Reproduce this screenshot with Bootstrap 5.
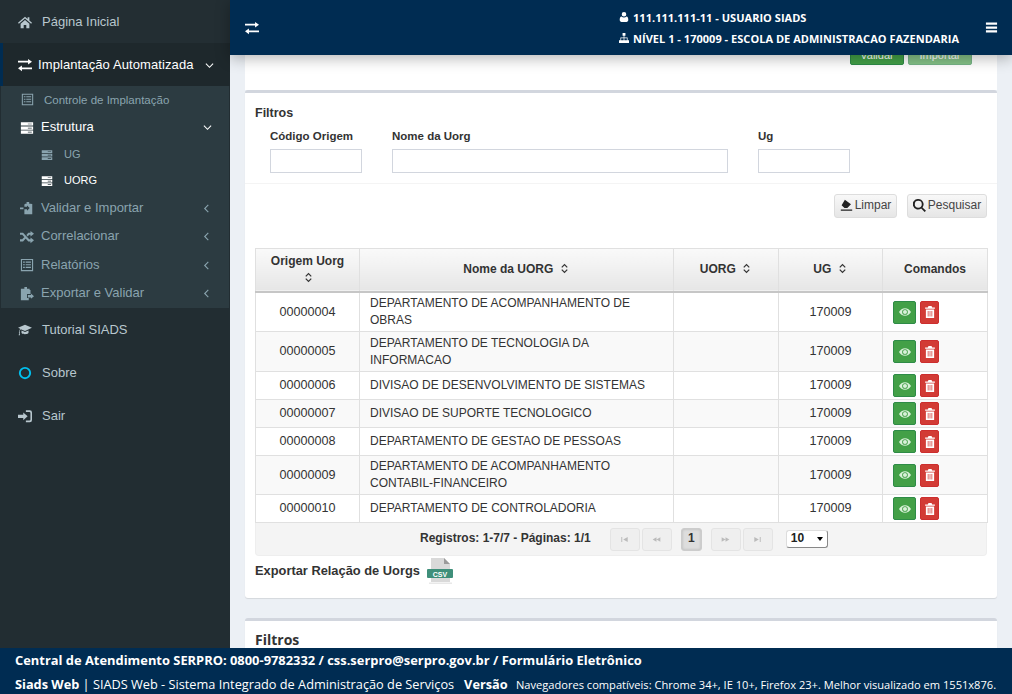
<!DOCTYPE html>
<html lang="pt-BR">
<head>
    <meta charset="UTF-8">
    <title>SIADS Web</title>
    <link href="https://cdn.jsdelivr.net/npm/bootstrap@5.3.0/dist/css/bootstrap.min.css" rel="stylesheet">
    <style>
        html, body { height: 100%; overflow: hidden; }
        body { background: #ecf0f5; color: #333; font: 13px/1.42 "Liberation Sans", Arial, sans-serif; }
        .app { height: 694px; }
        .ico { width: 1em; height: 1em; fill: currentColor; flex: none; }

        /* menu lateral */
        .sidebar { width: 230px; background: #222d32; color: #b8c7ce; font-size: 13px; }
        .sidebar a { color: inherit; text-decoration: none; display: flex; align-items: center; }
        .top-item { height: 43px; padding: 1px 0 0 18px; }
        .top-item .ico { font-size: 14px; margin-right: 10px; }
        .top-item.first { background: #232e33; }
        .top-item.open { height: 43px; background: #1e282c; color: #fff; border-left: 3px solid #002c52; padding-left: 15px; letter-spacing: .1px; }
        .top-item.open .ico:first-child { margin-right: 6px; }
        .top-item.open .chev { margin-right: 16px; margin-left: auto; font-size: 9px; }
        .submenu { background: #2c3b41; margin: 0 1px; color: #8aa4af; height: 222px; }
        .submenu a { height: 28.5px; padding: .5px 0 0 19px; }
        .submenu a .ico:first-child { font-size: 14px; margin-right: 7px; }
        .submenu a.ctrl { height: 27px; font-size: 11.5px; padding-left: 20px; }
        .submenu a.ctrl .ico:first-child { font-size: 13px; margin-right: 10px; }
        .submenu a.sel { color: #fff; }
        .submenu a.leaf { height: 26px; padding-left: 40px; font-size: 11px; }
        .submenu a.leaf .ico:first-child { font-size: 12px; margin-right: 11px; }
        .submenu .chev { margin-left: auto; margin-right: 17px; font-size: 9px; }
        .submenu .chev.esq { margin-right: 18px; }
        .after-sub .ico.cyan { color: #00c0ef; }

        /* topo */
        .topbar { height: 55px; flex: none; background: #002c52; color: #fff; font: 700 11px/1 "Open Sans", sans-serif; letter-spacing: .03px; box-shadow: 0 3px 14px rgba(0,0,0,.3); z-index: 2; padding: 0 14px 0 15px; }
        .topbar > .ico { font-size: 14px; }
        .topbar > .ico.ms-auto { font-size: 13px; }
        .topbar .user { margin-left: 360px; gap: 10px; }
        .topbar .user .ico { margin-right: 4px; font-size: 10px; }

        /* conteudo */
        .content { overflow: hidden; padding: 0 15px; min-height: 0; }
        .box-top { height: 35px; background: #fff; padding: 0 25px 0 0; border-radius: 0; }
        .btn-cut { margin-top: -10px; height: 20px; width: 54px; background: #43a047; border: 1px solid #2e8b47; color: #fff; font-size: 11px; line-height: 14px; padding: 0; border-radius: 2px; }
        .btn-cut + .btn-cut { opacity: .65; width: 64px; }
        .box { background: #fff; border: 0; border-top: 3px solid #d2d6de; border-radius: 3px; box-shadow: 0 1px 1px rgba(0,0,0,.1); }
        .box h6 { font: 700 12.5px/1 "Liberation Sans", sans-serif; color: #333; margin: 0; }
        .filter-title { padding: 14px 10px 0; }
        .filters { padding: 10px 25px 10px; gap: 30px; }
        .filters label { display: block; font-weight: 700; font-size: 11.5px; line-height: 13px; margin-bottom: 6px; }
        .filters .form-control { height: 24px; border: 1px solid #d2d6de; border-radius: 0; padding: 2px 6px; font-size: 12px; }
        .w-cod { width: 92px; }
        .w-nome { width: 336px; }
        .actions { border-top: 1px solid #f4f4f4; padding: 10px 10px 0; gap: 10px; height: 65px; }
        .btn-gray { height: 24px; background: linear-gradient(#f8f8f8, #e6e6e6); border: 1px solid #ddd; border-radius: 3px; color: #444; font-size: 12px; padding: 0; display: flex; align-items: center; justify-content: center; gap: 2px; }
        .btn-gray .ico { font-size: 13px; color: #222; }
        .btn-lim { width: 63px; }
        .btn-pes { width: 80px; }

        /* tabela */
        .tbl-wrap { padding: 0 10px; }
        .uorg { table-layout: fixed; margin: 0; font-size: 12px; color: #333; --bs-border-color: #e0e0e0; }
        .uorg th { background: linear-gradient(#fafafa, #e6e6e6); font-size: 12px; line-height: 17px; text-align: center; vertical-align: middle; padding: 3px 8px; height: 44px; border-bottom: 2px solid #c6c6c6; }
        .uorg td { padding: 2px 10px; vertical-align: middle; line-height: 17px; }
        .uorg tbody tr:nth-child(even) td { background: #f9f9f9; }
        .uorg td.c { text-align: center; font-size: 12.6px; }
        .uorg .cmd { padding: 0 10px; }
        .uorg tr.lin1 td { height: 28px; }
        .uorg tr.lin2 td { height: 39px; }
        .uorg tbody tr:nth-child(2) td { height: 40px; }
        .sort { font-size: 11px; vertical-align: -1px; margin-left: 2px; }
        .icon-btn { width: 23px; height: 23px; border-radius: 2px; padding: 0; display: inline-flex; align-items: center; justify-content: center; font-size: 12px; background: #43a047; border: 1px solid #2e8b47; color: #d9f0d9; vertical-align: middle; }
        .icon-btn.del { width: 19px; background: #d23b35; border-color: #cc2e2e; color: #fff; margin-left: 1px; }
        .pager-bar { height: 33px; background: #f4f4f4; border: 1px solid #eee; border-top: 0; border-radius: 0 0 4px 4px; font-size: 12px; font-weight: 700; padding-left: 164px; }
        .pager-nav { gap: 2px; margin: 0 13px 0 19px; }
        .pg { width: 30px; height: 23px; background: #efefef; border: 1px solid #e4e4e4; border-radius: 3px; color: #bbb; display: flex; align-items: center; justify-content: center; font-size: 9px; }
        .pg.on { width: 21px; margin: 0 7px; background: #ddd; border-color: #ccc; color: #333; font-size: 12px; box-shadow: inset 0 0 3px rgba(0,0,0,.2); }
        .per-page { width: 42px; height: 18px; background: #fff; border-radius: 3px; border: 1px solid #ddd; border-right-color: #888; border-bottom-color: #888; font-size: 12px; padding: 0 4px; color: #222; }
        .per-page i { width: 0; height: 0; border: 3px solid transparent; border-top: 4px solid #000; border-bottom: 0; }
        .export { padding-top: 1px; height: 42px; font-weight: 700; font-size: 12.85px; gap: 6px; }
        .export span { padding-top: 5px; }
        .export svg { width: 28px; height: 28px; }
        .box-last { margin-top: 20px; padding: 12px 10px 10px; }
        .box-last h6 { font: 700 14px/1 "Open Sans", sans-serif; }

        /* rodape */
        .rodape { height: 46px; flex: none; background: #002c52; color: #fff; font: 12.75px/1 "Open Sans", sans-serif; padding: 5px 15px 0; z-index: 3; position: relative; white-space: nowrap; }
        .rodape .l1 { font-size: 12.9px; font-weight: 700; margin-bottom: 10px; line-height: 15px; }
        .rodape small { font-size: 11.1px; margin-left: 5px; }
    </style>
</head>
<body>

<svg width="0" height="0" class="position-absolute">
    <symbol id="i-home" viewBox="0 0 16 16"><path d="M8 2 0 8.800l1 1.100L8 4l7 5.900 1-1.100-3-2.600V2.500h-2v2zM3 10v5h3.500v-3.500h3V15H13v-5L8 5.600z"/></symbol>
    <symbol id="i-exch" viewBox="0 0 16 16"><path d="M0 3.200h11.500V1L16 4.200l-4.500 3.200V5.200H0zM16 10.800H4.500V8.600L0 11.800 4.500 15v-2.200H16z"/></symbol>
    <symbol id="i-list" viewBox="0 0 16 16"><path d="M1 1h14v14H1zm1.300 1.300v11.400h11.400V2.300zM3.500 4h2v1.300h-2zm3 0h6v1.300h-6zm-3 3h2v1.300h-2zm3 0h6v1.300h-6zm-3 3h2v1.300h-2zm3 0h6v1.300h-6z" fill-rule="evenodd"/></symbol>
    <symbol id="i-serv" viewBox="0 0 16 16"><path d="M1 1.500h14v3.700H1zM1 6.200h14v3.700H1zM1 10.900h14v3.700H1z"/><path fill="#2c3b41" d="M9 3h4.500v.8H9zM9 7.700h4.500v.8H9zM9 12.400h4.500v.8H9z"/></symbol>
    <symbol id="i-imp" viewBox="0 0 16 16"><path d="M6 3h1.500V1h3v2H12l2 .5V15H5V9.500h3V11l3-3-3-3v1.500H5V4zM0 7.500h4v2H0z"/></symbol>
    <symbol id="i-rand" viewBox="0 0 16 16"><path d="M0 3h3.500l7 7.500H12V8.500l4 3.200-4 3.300v-2H9.500l-7-7.500H0zM0 10.500h2.500L5 8l1.500 1.700L3.500 13H0zM9.500 3H12V1l4 3.200-4 3.300V5.500h-1.500L8.800 7.300 7.300 5.700z"/></symbol>
    <symbol id="i-exp" viewBox="0 0 16 16"><path d="M5 0h3v2h3v1.500h1V8H8v4.500h2V15H1V2h4zM9 9h3.500V7.500L16 10.500 12.500 13.500V12H9z"/></symbol>
    <symbol id="i-cap" viewBox="0 0 16 16"><path d="M8 2 0 5.500l2.500 1.100C1.700 7.600 1.500 8.800 1.400 9.800 1 10 .9 11 1.300 11.300L.8 14h1.500l-.4-2.700c.4-.4.300-1.200 0-1.500.1-1 .4-2 1.200-2.800L8 9l8-3.500zM4 8.500v3c1.500 1.800 6.500 1.800 8 0v-3L8 10.300z"/></symbol>
    <symbol id="i-ring" viewBox="0 0 16 16"><path d="M8 1a7 7 0 1 0 0 14A7 7 0 0 0 8 1zm0 2.200a4.800 4.800 0 1 1 0 9.600 4.800 4.800 0 0 1 0-9.600z" fill-rule="evenodd"/></symbol>
    <symbol id="i-sair" viewBox="0 0 16 16"><path d="M6 4v2.500H0v3.800h6v2.500l5-4.400zM9 1.500h4.500A2.500 2.500 0 0 1 16 4v8.500a2.500 2.500 0 0 1-2.500 2.500H9v-1.800h4c.8 0 1.200-.4 1.200-1.200V4.500c0-.8-.4-1.200-1.200-1.200H9z"/></symbol>
    <symbol id="i-down" viewBox="0 0 10 10"><path d="M1 3l4 4 4-4" fill="none" stroke="currentColor" stroke-width="1.200"/></symbol>
    <symbol id="i-left" viewBox="0 0 10 10"><path d="M7 1 3 5l4 4" fill="none" stroke="currentColor" stroke-width="1.200"/></symbol>
    <symbol id="i-user" viewBox="0 0 12 14"><path d="M6 0a3.200 3.200 0 1 1 0 6.400A3.200 3.200 0 0 1 6 0zM2.500 6.200C3.500 7.200 4.700 7.600 6 7.600s2.500-.4 3.500-1.400c1.700.3 2.500 2 2.500 4.800 0 1.900-1.100 3-2.500 3h-7C1.100 14 0 12.900 0 11c0-2.800.8-4.500 2.500-4.800z"/></symbol>
    <symbol id="i-tree" viewBox="0 0 14 14"><path d="M5 0h4v4H7.500v2.200H12V10h2v4H9v-4h2V7.200H7.500V10H9v4H5v-4h1.500V7.200H3V10h2v4H0v-4h2V6.200h4.500V4H5z"/></symbol>
    <symbol id="i-bars" viewBox="0 0 14 14"><path d="M1 1.500h12v2.500H1zM1 5.800h12v2.500H1zM1 10h12v2.500H1z"/></symbol>
    <symbol id="i-eye" viewBox="0 0 16 16"><path d="M8 3C4.500 3 1.800 5.200 0 8c1.800 2.800 4.500 5 8 5s6.200-2.200 8-5c-1.800-2.800-4.500-5-8-5zm0 8.800A3.800 3.800 0 0 1 8 4.200a3.800 3.800 0 0 1 0 7.600zM8 5.300a2.700 2.700 0 1 0 0 5.400 2.700 2.700 0 0 0 0-5.400z" fill-rule="evenodd"/></symbol>
    <symbol id="i-trash" viewBox="0 0 14 16"><path d="M5 0h4l1 2h3.500v1.500H.5V2H4zM1.500 4.500h11V16h-11zM4 6.500V14h1V6.500zm2.500 0V14h1V6.500zm2.500 0V14h1V6.500z" fill-rule="evenodd"/></symbol>
    <symbol id="i-eraser" viewBox="0 0 16 16"><path d="M6 1l7.500 5.500L9 11H5.500L2 7.800zM1 13h14v1.500H1z"/></symbol>
    <symbol id="i-search" viewBox="0 0 16 16"><path d="M6.500 0a6.500 6.500 0 0 1 5.200 10.400L16 14.400 14.300 16l-4.200-4.300A6.500 6.500 0 1 1 6.500 0zm0 2.200a4.300 4.300 0 1 0 0 8.600 4.300 4.300 0 0 0 0-8.600z" fill-rule="evenodd"/></symbol>
    <symbol id="i-sort" viewBox="0 0 10 14"><path d="M1.500 5.500 5 2l3.500 3.500M1.500 8.500 5 12l3.500-3.500" fill="none" stroke="currentColor" stroke-width="1.600"/></symbol>
    <symbol id="i-first" viewBox="0 0 14 10"><path d="M2 1h1.500v8H2zM12 1v8L5 5z"/></symbol>
    <symbol id="i-prev" viewBox="0 0 14 10"><path d="M7 1.500v7L1 5zM13 1.500v7L7 5z"/></symbol>
    <symbol id="i-next" viewBox="0 0 14 10"><path d="M1 1.500v7L7 5zM7 1.500v7L13 5z"/></symbol>
    <symbol id="i-last" viewBox="0 0 14 10"><path d="M2 1v8l7-4zM10.500 1H12v8h-1.500z"/></symbol>
</svg>

<div class="app d-flex flex-column">
    <div class="d-flex flex-grow-1" style="min-height:0">
        <nav class="sidebar flex-shrink-0">
            <a href="#" class="top-item first"><svg class="ico"><use href="#i-home"/></svg>Página Inicial</a>
            <a href="#" class="top-item open"><svg class="ico"><use href="#i-exch"/></svg>Implantação Automatizada<svg class="ico chev"><use href="#i-down"/></svg></a>
            <div class="submenu">
                <a href="#" class="ctrl"><svg class="ico"><use href="#i-list"/></svg>Controle de Implantação</a>
                <a href="#" class="sel"><svg class="ico"><use href="#i-serv"/></svg>Estrutura<svg class="ico chev"><use href="#i-down"/></svg></a>
                <a href="#" class="leaf"><svg class="ico"><use href="#i-serv"/></svg>UG</a>
                <a href="#" class="leaf sel"><svg class="ico"><use href="#i-serv"/></svg>UORG</a>
                <a href="#"><svg class="ico"><use href="#i-imp"/></svg>Validar e Importar<svg class="ico chev esq"><use href="#i-left"/></svg></a>
                <a href="#"><svg class="ico"><use href="#i-rand"/></svg>Correlacionar<svg class="ico chev esq"><use href="#i-left"/></svg></a>
                <a href="#"><svg class="ico"><use href="#i-list"/></svg>Relatórios<svg class="ico chev esq"><use href="#i-left"/></svg></a>
                <a href="#"><svg class="ico"><use href="#i-exp"/></svg>Exportar e Validar<svg class="ico chev esq"><use href="#i-left"/></svg></a>
            </div>
            <div class="after-sub">
                <a href="#" class="top-item"><svg class="ico"><use href="#i-cap"/></svg>Tutorial SIADS</a>
                <a href="#" class="top-item"><svg class="ico cyan"><use href="#i-ring"/></svg>Sobre</a>
                <a href="#" class="top-item"><svg class="ico"><use href="#i-sair"/></svg>Sair</a>
            </div>
        </nav>

        <div class="d-flex flex-column flex-grow-1" style="min-width:0">
            <header class="topbar d-flex align-items-center">
                <svg class="ico"><use href="#i-exch"/></svg>
                <div class="user d-flex flex-column">
                    <div class="d-flex align-items-center"><svg class="ico"><use href="#i-user"/></svg>111.111.111-11 - USUARIO SIADS</div>
                    <div class="d-flex align-items-center"><svg class="ico"><use href="#i-tree"/></svg>NÍVEL 1 - 170009 - ESCOLA DE ADMINISTRACAO FAZENDARIA</div>
                </div>
                <svg class="ico ms-auto"><use href="#i-bars"/></svg>
            </header>

            <main class="content flex-grow-1">
                <div class="box-top d-flex justify-content-end gap-1">
                    <button class="btn-cut">Validar</button>
                    <button class="btn-cut">Importar</button>
                </div>

                <section class="box">
                    <h6 class="filter-title">Filtros</h6>
                    <div class="filters d-flex">
                        <div><label>Código Origem</label><input class="form-control w-cod"></div>
                        <div><label>Nome da Uorg</label><input class="form-control w-nome"></div>
                        <div><label>Ug</label><input class="form-control w-cod"></div>
                    </div>
                    <div class="actions d-flex justify-content-end align-items-start">
                        <button class="btn-gray btn-lim"><svg class="ico"><use href="#i-eraser"/></svg>Limpar</button>
                        <button class="btn-gray btn-pes"><svg class="ico"><use href="#i-search"/></svg>Pesquisar</button>
                    </div>
                    <div class="tbl-wrap">
                        <table class="table table-bordered uorg">
                            <colgroup><col style="width:104px"><col style="width:314px"><col style="width:105px"><col style="width:104px"><col style="width:105px"></colgroup>
                            <thead>
                                <tr>
                                    <th>Origem Uorg<br><svg class="ico sort"><use href="#i-sort"/></svg></th>
                                    <th>Nome da UORG <svg class="ico sort"><use href="#i-sort"/></svg></th>
                                    <th>UORG <svg class="ico sort"><use href="#i-sort"/></svg></th>
                                    <th>UG <svg class="ico sort"><use href="#i-sort"/></svg></th>
                                    <th>Comandos</th>
                                </tr>
                            </thead>
                            <tbody id="linhas"></tbody>
                        </table>
                        <div class="pager-bar d-flex align-items-center">
                            <span>Registros: 1-7/7 - Páginas: 1/1</span>
                            <div class="pager-nav d-flex align-items-center">
                                <span class="pg"><svg class="ico"><use href="#i-first"/></svg></span>
                                <span class="pg"><svg class="ico"><use href="#i-prev"/></svg></span>
                                <span class="pg on">1</span>
                                <span class="pg"><svg class="ico"><use href="#i-next"/></svg></span>
                                <span class="pg"><svg class="ico"><use href="#i-last"/></svg></span>
                            </div>
                            <span class="per-page d-flex align-items-center justify-content-between">10<i></i></span>
                        </div>
                        <div class="export d-flex align-items-start">
                            <span>Exportar Relação de Uorgs</span>
                            <svg viewBox="0 0 28 28">
                                <path d="M5 1h13l6 6v18H5z" fill="#d9d9d9"/>
                                <path d="M18 1l6 6h-6z" fill="#9a9a9a"/>
                                <rect x="1" y="12" width="26" height="9" rx="1" fill="#3f8f7a"/>
                                <rect x="3" y="25.500" width="23" height="1.500" fill="#e8e8e8"/>
                                <text x="14" y="19.500" text-anchor="middle" font-family="Liberation Sans" font-weight="700" font-size="7" fill="#fff">CSV</text>
                            </svg>
                        </div>
                    </div>
                </section>

                <section class="box box-last"><h6>Filtros</h6></section>
            </main>
        </div>
    </div>

    <footer class="rodape">
        <div class="l1">Central de Atendimento SERPRO: 0800-9782332 / css.serpro@serpro.gov.br / Formulário Eletrônico</div>
        <div><b>Siads Web</b> | SIADS Web - Sistema Integrado de Administração de Serviços &nbsp;&nbsp;<b>Versão</b> <small>Navegadores compatíveis: Chrome 34+, IE 10+, Firefox 23+. Melhor visualizado em 1551x876.</small></div>
    </footer>
</div>

<script>
const uorgs = [
    ['00000004', 'DEPARTAMENTO DE ACOMPANHAMENTO DE OBRAS', 2],
    ['00000005', 'DEPARTAMENTO DE TECNOLOGIA DA INFORMACAO', 2],
    ['00000006', 'DIVISAO DE DESENVOLVIMENTO DE SISTEMAS', 1],
    ['00000007', 'DIVISAO DE SUPORTE TECNOLOGICO', 1],
    ['00000008', 'DEPARTAMENTO DE GESTAO DE PESSOAS', 1],
    ['00000009', 'DEPARTAMENTO DE ACOMPANHAMENTO CONTABIL-FINANCEIRO', 2],
    ['00000010', 'DEPARTAMENTO DE CONTROLADORIA', 1]
];
document.getElementById('linhas').innerHTML = uorgs.map(u => `
    <tr class="lin${u[2]}">
        <td class="c">${u[0]}</td>
        <td>${u[1]}</td>
        <td></td>
        <td class="c">170009</td>
        <td class="cmd"><span class="btn icon-btn"><svg class="ico"><use href="#i-eye"/></svg></span> <span class="btn icon-btn del"><svg class="ico"><use href="#i-trash"/></svg></span></td>
    </tr>
`).join('');
</script>
<script src="https://cdn.jsdelivr.net/npm/bootstrap@5.3.0/dist/js/bootstrap.bundle.min.js"></script>
</body>
</html>
